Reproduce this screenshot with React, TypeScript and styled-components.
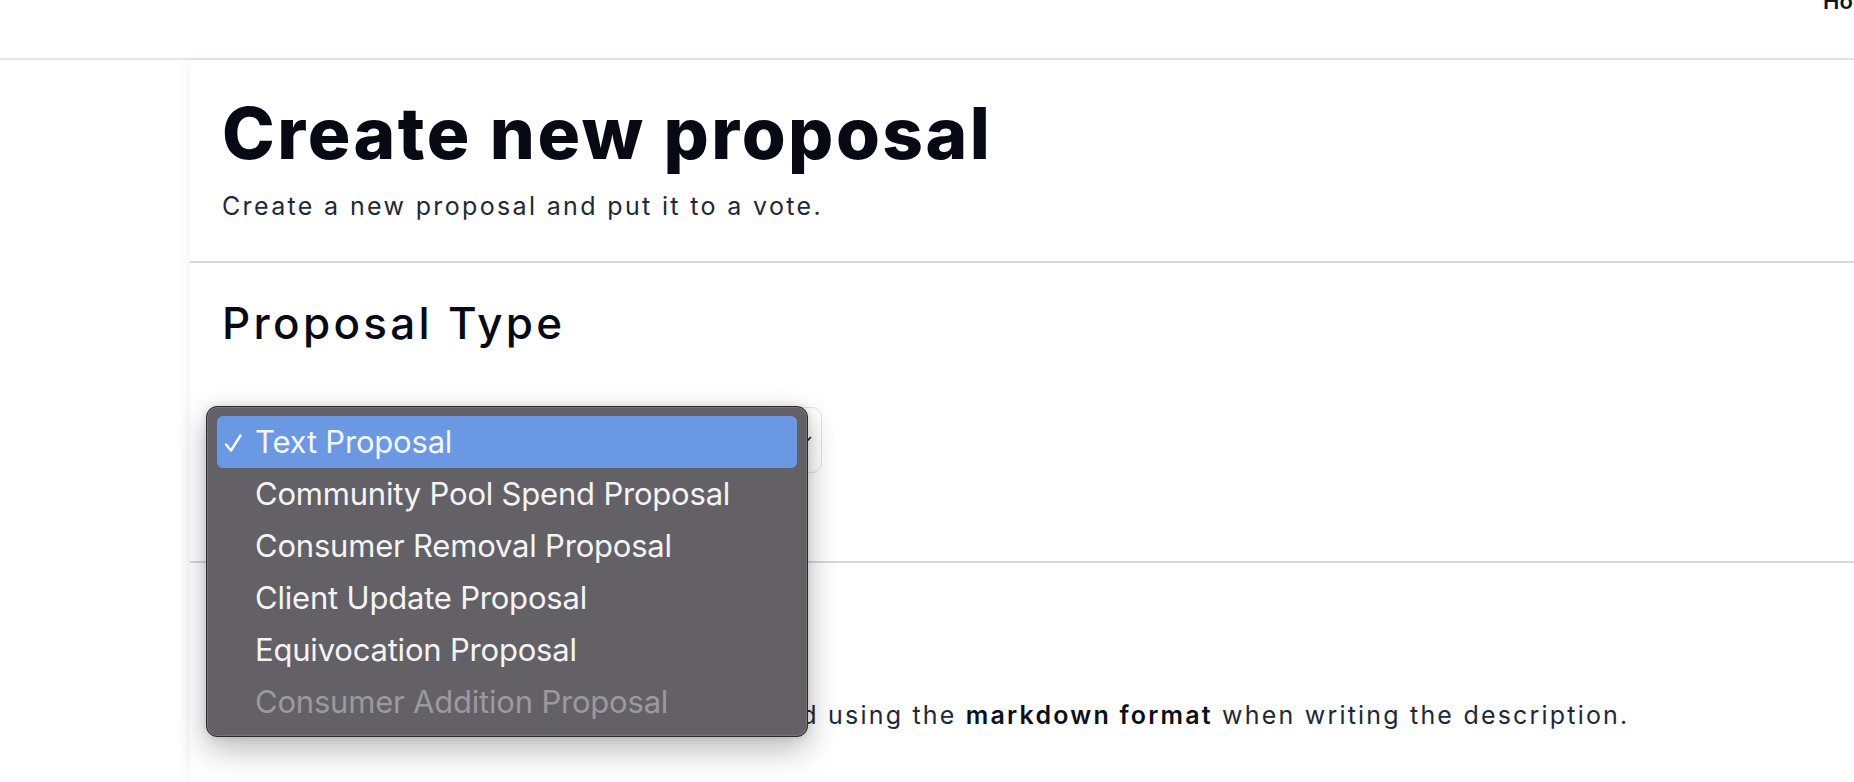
import React from "react";
import styled, { createGlobalStyle } from "styled-components";

const GlobalStyle = createGlobalStyle`
  html, body {
    margin: 0;
    padding: 0;
    height: 782px;
    overflow: hidden;
    background: #ffffff;
  }
  body {
    font-family: Inter, "Liberation Sans", sans-serif;
    color: #1f2533;
  }
  * {
    box-sizing: border-box;
  }
`;

const proposalTypes = [
  { label: "Text Proposal", selected: true },
  { label: "Community Pool Spend Proposal" },
  { label: "Consumer Removal Proposal" },
  { label: "Client Update Proposal" },
  { label: "Equivocation Proposal" },
  { label: "Consumer Addition Proposal", disabled: true },
];

const App = () => {
  return (
    <Page>
      <GlobalStyle />
      <Header>
        <Brand />
        <Nav>
          <NavLink>Home</NavLink>
          <NavLink>Proposals</NavLink>
        </Nav>
      </Header>
      <Main>
        <Aside />
        <Panel>
          <Section $bottom={37}>
            <Title>Create new proposal</Title>
            <Lead>Create a new proposal and put it to a vote.</Lead>
          </Section>
          <Section $top={34} $bottom={88}>
            <Heading>Proposal Type</Heading>
            <SelectWrap>
              <SelectBox>
                <span>Text Proposal</span>
                <Chevron viewBox="0 0 16 16">
                  <path d="M2 5l6 6 6-6" />
                </Chevron>
              </SelectBox>
              <Menu>
                {proposalTypes.map((item) => (
                  <MenuItem
                    key={item.label}
                    $active={!!item.selected}
                    $disabled={!!item.disabled}
                  >
                    <CheckSlot>
                      {item.selected && (
                        <svg width="20" height="20" viewBox="0 0 20 20">
                          <path
                            d="M2 11.5l5 6 9.5-15"
                            fill="none"
                            stroke="#ffffff"
                            strokeWidth="2.4"
                            strokeLinecap="round"
                            strokeLinejoin="round"
                          />
                        </svg>
                      )}
                    </CheckSlot>
                    {item.label}
                  </MenuItem>
                ))}
              </Menu>
            </SelectWrap>
          </Section>
          <Section $top={35} $last>
            <Heading>Proposal Details</Heading>
            <Text>
              Explain your proposal well. We recommend using the{" "}
              <strong>markdown format</strong> when writing the description.
            </Text>
          </Section>
        </Panel>
      </Main>
    </Page>
  );
};

export default App;

const Page = styled.div`
  width: 1854px;
  height: 782px;
  overflow: hidden;
  display: flex;
  flex-direction: column;
`;

const Header = styled.header`
  height: 60px;
  flex-shrink: 0;
  display: grid;
  grid-template-columns: 1823px 1fr;
  border-bottom: 2px solid #e5e6ea;
  overflow: hidden;
`;

const Brand = styled.div``;

const Nav = styled.nav`
  display: flex;
  gap: 40px;
  margin-top: -10px;
  white-space: nowrap;
`;

const NavLink = styled.a`
  font-size: 22px;
  line-height: 22px;
  font-weight: 600;
  color: #0f1424;
`;

const Main = styled.main`
  flex: 1;
  display: flex;
`;

const Aside = styled.div`
  width: 190px;
  flex-shrink: 0;
`;

const Panel = styled.div`
  flex: 1;
  background: #ffffff;
  box-shadow: -2px 0 10px rgba(0, 0, 0, 0.05);
`;

const Section = styled.section<{ $top?: number; $bottom?: number; $last?: boolean }>`
  padding: ${(p) => p.$top ?? 38}px 32px ${(p) => p.$bottom ?? 38}px;
  border-bottom: ${(p) => (p.$last ? "none" : "2px solid #d6d8dd")};
`;

const Title = styled.h1`
  margin: 0;
  font-size: 71px;
  line-height: 70px;
  font-weight: 800;
  letter-spacing: 2.5px;
  color: #070a14;
`;

const Lead = styled.p`
  margin: 20px 0 0;
  font-size: 25px;
  line-height: 36px;
  letter-spacing: 2.35px;
  color: #222836;
`;

const Heading = styled.h2`
  margin: 0;
  font-size: 44px;
  line-height: 52px;
  font-weight: 500;
  letter-spacing: 3.3px;
  color: #070a14;
`;

const SelectWrap = styled.div`
  position: relative;
  width: 600px;
  margin-top: 58px;
`;

const SelectBox = styled.div`
  height: 66px;
  border: 1.5px solid #e3e4e8;
  border-radius: 10px;
  display: flex;
  align-items: center;
  justify-content: space-between;
  padding: 0 8px 0 20px;
  font-size: 25px;
  color: #1f2533;
`;

const Chevron = styled.svg`
  width: 16px;
  height: 16px;
  fill: none;
  stroke: #1a1d26;
  stroke-width: 1.6;
`;

const Menu = styled.div`
  position: absolute;
  left: -16px;
  top: -1px;
  width: 602px;
  padding: 9px 10px 8px 10px;
  background: #636166;
  border: 1px solid #2b2a2e;
  border-radius: 11px;
  box-shadow: inset 0 0 0 1px rgba(255, 255, 255, 0.14),
    0 12px 32px rgba(0, 0, 0, 0.28), 0 0 8px rgba(0, 0, 0, 0.12);
  font-family: Inter, "Liberation Sans", sans-serif;
`;

const MenuItem = styled.div<{ $active: boolean; $disabled: boolean }>`
  height: 52px;
  display: flex;
  align-items: center;
  padding-bottom: 2px;
  border-radius: 6px;
  font-size: 31px;
  letter-spacing: -0.2px;
  background: ${(p) => (p.$active ? "#6a98e3" : "transparent")};
  color: ${(p) => (p.$disabled ? "#9b999e" : "#f4f4f5")};
`;

const CheckSlot = styled.span`
  width: 38px;
  padding-left: 7px;
  display: flex;
  align-items: center;
  padding-top: 4px;
`;

const Text = styled.p`
  margin: 47px 0 0;
  font-size: 25px;
  line-height: 36px;
  letter-spacing: 2.2px;
  color: #222836;
  strong {
    font-weight: 600;
    color: #0c0f1a;
  }
`;
